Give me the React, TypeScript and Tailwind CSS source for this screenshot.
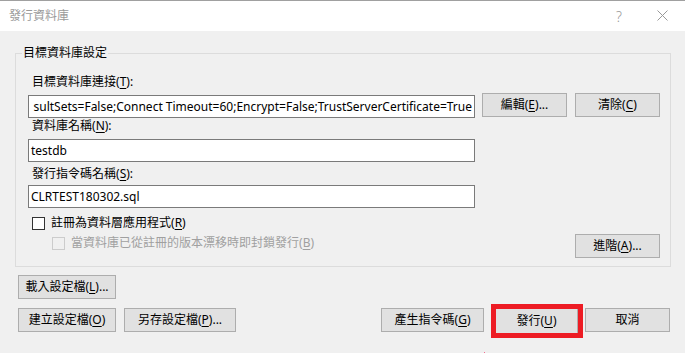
import React from "react";

const font = "font-['Noto_Sans','Noto_Sans_CJK_TC',sans-serif]";

const Btn = ({ children, w }: { children: React.ReactNode; w: string }) => (
  <button
    className={`${w} h-[24px] shrink-0 bg-[#e1e1e1] border border-[#adadad] text-[12px] leading-none text-black flex items-center justify-center`}
  >
    {children}
  </button>
);

const Mn = ({ c }: { c: string }) => (
  <>
    (<span className="underline underline-offset-2">{c}</span>)
  </>
);

const Field = ({ children }: { children: React.ReactNode }) => (
  <div className="w-[447px] h-[23px] shrink-0 bg-white border border-[#7a7a7a] flex items-center overflow-hidden pl-[2px] pr-[2px] text-[12px] text-black whitespace-nowrap">
    {children}
  </div>
);

export default function App() {
  return (
    <div className={`w-[685px] h-[353px] bg-[#f0f0f0] overflow-hidden ${font} text-black`}>
      {/* title bar */}
      <div className="h-[31px] bg-white border-t border-[#a0a0a0] flex items-center pl-[9px] pr-[17px] text-[12px] text-[#9a9a9a]">
        <span>發行資料庫</span>
        <span className="ml-auto mr-[35px] text-[14px] font-light text-[#999]">?</span>
        <svg width="11" height="11" viewBox="0 0 11 11" className="mb-[1px]">
          <path d="M0.5 0.5L10.5 10.5M10.5 0.5L0.5 10.5" stroke="#999" strokeWidth="1" />
        </svg>
      </div>

      {/* group box */}
      <fieldset className="mx-[15px] mt-[14px] border border-[#dcdcdc] pl-[12px] pr-[10px] pb-[8px]">
        <legend className="-ml-[6px] px-[1px] text-[12px] leading-[16px]">目標資料庫設定</legend>

        <div className="mt-[13px] pl-[4px] text-[12px] leading-[16px]">
          目標資料庫連接<Mn c="T" />:
        </div>
        <div className="mt-[3px] flex items-start">
          <div className="mt-[2px] w-[447px] h-[23px] shrink-0 bg-white border border-[#7a7a7a] flex justify-end items-center overflow-hidden pr-[2px] text-[12px] whitespace-nowrap">
            <span>sultSets=False;Connect Timeout=60;Encrypt=False;TrustServerCertificate=True</span>
          </div>
          <div className="ml-[7px]">
            <Btn w="w-[85px]">
              編輯<Mn c="E" />...
            </Btn>
          </div>
          <div className="ml-[8px]">
            <Btn w="w-[85px]">
              清除<Mn c="C" />
            </Btn>
          </div>
        </div>

        <div className="mt-[0px] pl-[4px] text-[12px] leading-[16px]">
          資料庫名稱<Mn c="N" />:
        </div>
        <div className="mt-[5px]">
          <Field>testdb</Field>
        </div>

        <div className="mt-[4px] pl-[4px] text-[12px] leading-[16px]">
          發行指令碼名稱<Mn c="S" />:
        </div>
        <div className="mt-[3px]">
          <Field>CLRTEST180302.sql</Field>
        </div>

        <div className="mt-[7px] pl-[4px] h-[16px] flex items-center text-[12px]">
          <div className="w-[13px] h-[13px] bg-white border border-[#333333]" />
          <span className="ml-[6px]">
            註冊為資料層應用程式<Mn c="R" />
          </span>
        </div>

        <div className="mt-[3px] flex items-start justify-between">
          <div className="mt-[1px] pl-[24px] h-[16px] flex items-center text-[12px] text-[#a0a0a0]">
            <div className="w-[13px] h-[13px] border border-[#cccccc]" />
            <span className="ml-[6px]">
              當資料庫已從註冊的版本漂移時即封鎖發行<Mn c="B" />
            </span>
          </div>
          <Btn w="w-[85px]">
            進階<Mn c="A" />...
          </Btn>
        </div>
      </fieldset>

      {/* bottom buttons */}
      <div className="mt-[8px] ml-[18px]">
        <Btn w="w-[98px]">
          載入設定檔<Mn c="L" />...
        </Btn>
      </div>
      <div className="mt-[5px] ml-[18px] mr-[15px] flex items-start">
        <div className="mt-[4px] flex gap-[8px]">
          <Btn w="w-[98px]">
            建立設定檔<Mn c="O" />
          </Btn>
          <Btn w="w-[112px]">
            另存設定檔<Mn c="P" />...
          </Btn>
        </div>
        <div className="flex-1" />
        <div className="mt-[4px]">
          <Btn w="w-[103px]">
            產生指令碼<Mn c="G" />
          </Btn>
        </div>
        <div className="ml-[7px] w-[92px] h-[34px] border-[5px] border-[#ed1c24]">
          <button className="w-full h-full bg-[#e1e1e1] border-r border-[#adadad] text-[12px] leading-none flex items-center justify-center">
            發行<Mn c="U" />
          </button>
        </div>
        <div className="ml-[2px] mt-[4px]">
          <Btn w="w-[85px]">取消</Btn>
        </div>
      </div>
      <div className="ml-[484px] mt-[14px] w-[1px] h-[3px] bg-[#f07090]" />
    </div>
  );
}
